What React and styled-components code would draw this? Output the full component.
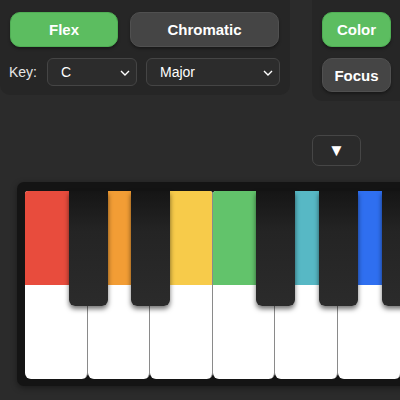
import React from "react";
import styled, { createGlobalStyle } from "styled-components";

const Global = createGlobalStyle`
  html, body { margin: 0; padding: 0; background: #2b2b2b; overflow: hidden; }
  body { font-family: "Liberation Sans", Arial, sans-serif; color: #fff; }
`;

const Page = styled.div`
  width: 400px;
  height: 400px;
  overflow: hidden;
  background: #2b2b2b;
  display: flex;
  flex-direction: column;
`;

const TopBar = styled.div`
  display: flex;
  gap: 22px;
  align-items: flex-start;
`;

const Panel = styled.div`
  background: #262626;
  border-radius: 0 0 10px 10px;
  padding: 12px 10px 9px 10px;
  display: flex;
  flex-direction: column;
  gap: 11px;
  width: ${(p) => p.$w}px;
  box-sizing: border-box;
  flex-shrink: 0;
`;

const Row = styled.div`
  display: flex;
  align-items: center;
  gap: ${(p) => p.$gap || 12}px;
`;

const Button = styled.button`
  height: ${(p) => p.$h || 35}px;
  width: ${(p) => p.$w}px;
  border-radius: 10px;
  border: 1px solid ${(p) => (p.$active ? "#4fae54" : "#505050")};
  background: ${(p) => (p.$active ? "#5cbd60" : "#454545")};
  color: #fff;
  font-family: "Liberation Sans", Arial, sans-serif;
  font-weight: 700;
  font-size: 15px;
  padding: 0;
  box-shadow: 0 2px 3px rgba(0, 0, 0, 0.35);
  box-sizing: border-box;
`;

const Label = styled.span`
  font-size: 14px;
  color: #e6e6e6;
  width: 29px;
  margin-left: -1px;
`;

const SelectBox = styled.div`
  position: relative;
  width: ${(p) => p.$w}px;
  height: 28px;
  box-sizing: border-box;
  border: 1px solid #454545;
  border-radius: 6px;
  background: #2c2c2c;
  display: flex;
  align-items: center;
  padding-left: 13px;
  font-size: 14px;
  color: #fff;
`;

const Chevron = styled.svg`
  position: absolute;
  right: 5px;
  top: 8px;
`;

const Controls = styled.div`
  display: flex;
  justify-content: flex-start;
  padding-left: 312px;
  margin-top: 34px;
`;

const DownButton = styled.div`
  width: 49px;
  height: 31px;
  box-sizing: border-box;
  border: 1px solid #464646;
  border-radius: 7px;
  background: #2b2b2b;
  display: flex;
  align-items: center;
  justify-content: center;
  font-size: 17px;
  color: #fff;
`;

const Frame = styled.div`
  margin-top: 16px;
  margin-left: 17px;
  width: 460px;
  height: 204px;
  background: #141414;
  border-radius: 7px;
  padding: 9px 0 0 8px;
  box-sizing: border-box;
  position: relative;
  box-shadow: 0 2px 6px rgba(0,0,0,0.4);
`;

const Keys = styled.div`
  display: flex;
  position: relative;
  height: 188px;
`;

const WhiteKey = styled.div`
  width: 62.6px;
  flex-shrink: 0;
  height: 188px;
  box-sizing: border-box;
  border-right: 1px solid #8a8a8a;
  border-radius: 3px 3px 6px 6px;
  overflow: hidden;
  display: flex;
  flex-direction: column;
  background: #fff;
`;

const KeyColor = styled.div`
  height: 94px;
  background: ${(p) => p.$c};
`;

const BlackKey = styled.div`
  position: absolute;
  top: 0;
  width: 39px;
  height: 115px;
  border-radius: 0 0 6px 6px;
  background: linear-gradient(#151515, #242424 35%, #2b2b2b);
  box-shadow: 0 3px 5px rgba(0, 0, 0, 0.55);
`;

const whites = ["#e84c3d", "#f29d35", "#f7cb4a", "#62c36b", "#57b8c5", "#2f6ff0", "#9b59b6"];
const blackAt = [1, 2, 4, 5, 6];

export default function App() {
  return (
    <Page>
      <Global />
      <TopBar>
        <Panel $w={290}>
          <Row $gap={12}>
            <Button $active $w={108}>Flex</Button>
            <Button $w={149}>Chromatic</Button>
          </Row>
          <Row $gap={9}>
            <Label>Key:</Label>
            <SelectBox $w={90}>
              C
              <Chevron width="12" height="12" viewBox="0 0 12 12">
                <path d="M2 4 L6 8 L10 4" stroke="#fff" strokeWidth="1.4" fill="none" />
              </Chevron>
            </SelectBox>
            <SelectBox $w={134}>
              Major
              <Chevron width="12" height="12" viewBox="0 0 12 12">
                <path d="M2 4 L6 8 L10 4" stroke="#fff" strokeWidth="1.4" fill="none" />
              </Chevron>
            </SelectBox>
          </Row>
        </Panel>
        <Panel $w={100}>
          <Button $active $w={69}>Color</Button>
          <Button $w={69} $h={34}>Focus</Button>
        </Panel>
      </TopBar>
      <Controls>
        <DownButton>▼</DownButton>
      </Controls>
      <Frame>
        <Keys>
          {whites.map((c, i) => (
            <WhiteKey key={i}>
              <KeyColor $c={c} />
            </WhiteKey>
          ))}
          {blackAt.map((b) => (
            <BlackKey key={b} style={{ left: b * 62.6 - 19 }} />
          ))}
        </Keys>
      </Frame>
    </Page>
  );
}
